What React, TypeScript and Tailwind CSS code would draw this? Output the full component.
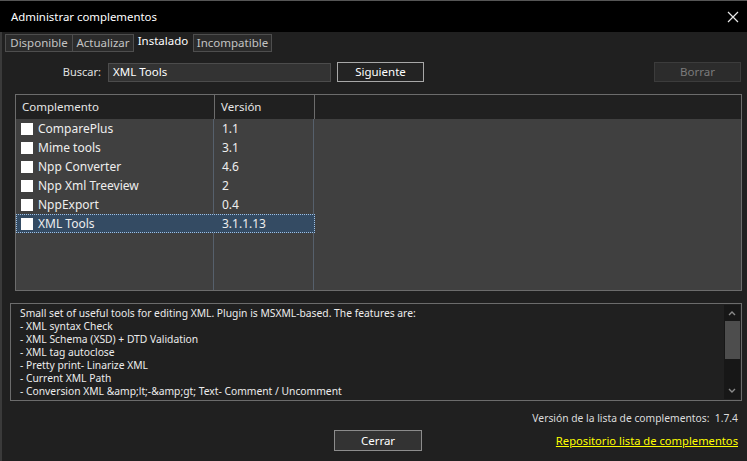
import React from 'react'

const plugins = [
  { name: 'ComparePlus', version: '1.1' },
  { name: 'Mime tools', version: '3.1' },
  { name: 'Npp Converter', version: '4.6' },
  { name: 'Npp Xml Treeview', version: '2' },
  { name: 'NppExport', version: '0.4' },
  { name: 'XML Tools', version: '3.1.1.13', selected: true },
]

const descripcion = [
  'Small set of useful tools for editing XML. Plugin is MSXML-based. The features are:',
  '- XML syntax Check',
  '- XML Schema (XSD) + DTD Validation',
  '- XML tag autoclose',
  '- Pretty print- Linarize XML',
  '- Current XML Path',
  '- Conversion XML &amp;lt;-&amp;gt; Text- Comment / Uncomment',
]

const tabs = [
  { label: 'Disponible', w: 'w-[68px]' },
  { label: 'Actualizar', w: 'w-[62px]' },
  { label: 'Instalado', w: 'w-[60px]', active: true },
  { label: 'Incompatible', w: 'w-[79px]' },
]

export default function App() {
  return (
    <div className="w-[747px] h-[461px] overflow-hidden bg-[#202020] text-white font-['Noto_Sans',sans-serif] text-[11.5px] flex flex-col border-t border-[#555]">
      {/* Barra de título */}
      <div className="h-[31px] shrink-0 bg-black flex items-center justify-between pl-[11px] pr-[4px]">
        <span className="text-[11.4px] text-white">Administrar complementos</span>
        <svg width="14" height="14" viewBox="0 0 14 14" className="mr-[3px]">
          <path d="M2 2 L12 12 M12 2 L2 12" stroke="#e8e8e8" strokeWidth="1.2" />
        </svg>
      </div>

      <div className="flex-1 flex flex-col border-l-2 border-[#3a3a3a]">
        {/* Pestañas */}
        <div className="flex items-end pl-[3px] mt-[2px] h-[18px]">
          {tabs.map((t) =>
            t.active ? (
              <div key={t.label} className={`${t.w} h-[18px] flex items-start justify-center text-white leading-[14px]`}>
                {t.label}
              </div>
            ) : (
              <div
                key={t.label}
                className={`${t.w} h-[18px] flex items-center justify-center bg-[#2b2b2b] border border-[#4e4e4e] text-[#c4c4c4] -mr-px`}
              >
                {t.label}
              </div>
            )
          )}
        </div>

        {/* Buscar */}
        <div className="flex items-center mt-[10px] h-[20px]">
          <span className="w-[99px] text-right text-[#e0e0e0] text-[11px]">Buscar:</span>
          <div className="ml-[7px] w-[223px] h-[19px] bg-[#333] border border-[#4c4c4c] flex items-center pl-[4px] text-white">
            XML Tools
          </div>
          <button className="ml-[6px] w-[87px] h-[20px] border border-[#a8a8a8] bg-[#232323] text-white flex items-center justify-center">
            Siguiente
          </button>
          <button className="ml-auto mr-[6px] w-[87px] h-[20px] border border-[#3c3c3c] bg-[#2c2c2c] text-[#7b7b7b] flex items-center justify-center">
            Borrar
          </button>
        </div>

        {/* Lista de complementos */}
        <div className="ml-[13px] mr-[5px] mt-[12px] h-[197px] border border-[#6c6c6c] flex flex-col">
          <div className="h-[24px] shrink-0 flex bg-[#202020] text-[#e6e6e6]">
            <div className="w-[199px] border-r border-[#6c6c6c] pl-[6px] flex items-center">Complemento</div>
            <div className="w-[100px] border-r border-[#6c6c6c] pl-[6px] flex items-center">Versión</div>
            <div className="flex-1" />
          </div>
          <div className="flex-1 bg-[#404040] relative flex text-[12px]">
            <div className="w-[198px] border-r border-[#56606c]" />
            <div className="w-[100px] border-r border-[#56606c]" />
            <div className="absolute inset-0 flex flex-col">
              {plugins.map((p) => (
                <div
                  key={p.name}
                  className={`h-[19px] w-[299px] flex items-center ${
                    p.selected ? 'bg-[#344b63] border border-dotted border-[#9ec0e4]' : 'border border-transparent'
                  }`}
                >
                  <div className="w-[199px] flex items-center pl-[4px]">
                    <span className="w-[12px] h-[12px] bg-white shrink-0" />
                    <span className="ml-[5px] text-[#eeeeee]">{p.name}</span>
                  </div>
                  <div className="pl-[6px] text-[#eeeeee]">{p.version}</div>
                </div>
              ))}
            </div>
          </div>
        </div>

        {/* Descripción */}
        <div className="ml-[8px] mr-[5px] mt-[12px] h-[98px] border border-[#6c6c6c] flex">
          <div className="flex-1 pl-[9px] pt-[3px] text-[10.3px] leading-[13px] text-[#ececec] whitespace-pre">
            {descripcion.map((l) => (
              <div key={l}>{l}</div>
            ))}
          </div>
          <div className="w-[16px] my-[1px] mr-[1px] bg-[#171717] flex flex-col items-center">
            <svg width="10" height="16" viewBox="0 0 10 16">
              <path d="M2 10 L5 7 L8 10" stroke="#8a8a8a" strokeWidth="1.4" fill="none" />
            </svg>
            <div className="w-[15px] h-[38px] bg-[#4d4d4d]" />
            <div className="flex-1" />
            <svg width="10" height="16" viewBox="0 0 10 16">
              <path d="M2 6 L5 9 L8 6" stroke="#8a8a8a" strokeWidth="1.4" fill="none" />
            </svg>
          </div>
        </div>

        {/* Pie */}
        <div className="flex justify-end mr-[9px] mt-[10px] text-[#dcdcdc] text-[10.3px]">
          Versión de la lista de complementos:&nbsp;&nbsp;1.7.4
        </div>
        <div className="flex items-center mt-[4px] relative">
          <button className="ml-[332px] w-[88px] h-[21px] border border-[#8c8c8c] bg-[#333] text-white flex items-center justify-center">
            Cerrar
          </button>
          <a className="ml-auto mr-[9px] mt-[1px] text-[11.2px] text-[#ffff00] underline">Repositorio lista de complementos</a>
        </div>
      </div>
    </div>
  )
}
